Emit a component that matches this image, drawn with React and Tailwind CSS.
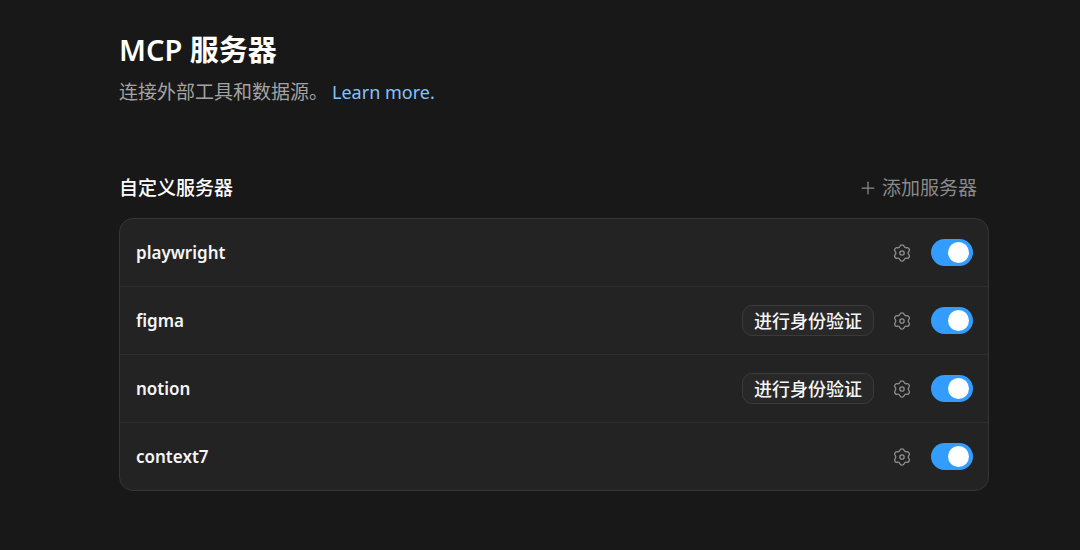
import React, { useState } from 'react';
import { Plus } from 'lucide-react';

const initialServers = [
  { name: 'playwright', needsAuth: false },
  { name: 'figma', needsAuth: true },
  { name: 'notion', needsAuth: true },
  { name: 'context7', needsAuth: false },
];

const GearIcon = () => (
  <svg
    viewBox="0 0 24 24"
    className="size-5"
    fill="none"
    stroke="currentColor"
    strokeWidth="1.6"
    strokeLinecap="round"
    strokeLinejoin="round"
    aria-hidden="true"
  >
    <path d="M9.3 4.3C9.8 2.9 10.7 2.3 12 2.3s2.2.6 2.7 2c.5 1.2 1.5 1.7 2.8 1.4 1.5-.3 2.4.2 3 1.3.7 1.2.6 2.2-.4 3.3-.9 1-.9 2.4 0 3.4 1 1.1 1.1 2.1.4 3.3-.6 1.1-1.5 1.6-3 1.3-1.3-.3-2.3.2-2.8 1.4-.5 1.4-1.4 2-2.7 2s-2.2-.6-2.7-2c-.5-1.2-1.5-1.7-2.8-1.4-1.5.3-2.4-.2-3-1.3-.7-1.2-.6-2.2.4-3.3.9-1 .9-2.4 0-3.4-1-1.1-1.1-2.1-.4-3.3.6-1.1 1.5-1.6 3-1.3 1.3.3 2.3-.2 2.8-1.4Z" />
    <circle cx="12" cy="12" r="2.6" />
  </svg>
);

const ServerRow = ({ server }) => {
  const [enabled, setEnabled] = useState(true);

  return (
    <li className="flex h-[68px] items-center border-b border-[#2e2e2e] pr-[15px] pl-4 last:h-[67px] last:border-b-0">
      <span className="flex-1 text-[17px] font-semibold text-[#f5f5f5]">{server.name}</span>
      {server.needsAuth && (
        <button
          type="button"
          className="mr-[18px] h-[31px] rounded-[10px] border border-[#3a3a3a] bg-[#282828] px-[11px] text-[18px] leading-7 font-medium text-[#f5f5f5]"
        >
          进行身份验证
        </button>
      )}
      <button type="button" aria-label={`${server.name} 设置`} className="mr-[19px] text-[#8f8f8f]">
        <GearIcon />
      </button>
      <input
        type="checkbox"
        role="switch"
        aria-label={server.name}
        checked={enabled}
        onChange={() => setEnabled(!enabled)}
        className="flex h-[27px] w-[42px] cursor-pointer appearance-none items-center rounded-full bg-[#4a4a4a] px-1 before:size-[21px] before:rounded-full before:bg-white checked:justify-end checked:bg-[#339cff]"
      />
    </li>
  );
};

const App = () => {
  return (
    <div className="min-h-screen bg-[#181818] pt-[30px] pr-[91px] pb-12 pl-[119px] font-['Noto_Sans','Noto_Sans_CJK_SC',sans-serif]">
      <header>
        <h1 className="text-[29px] leading-10 font-semibold text-white">MCP 服务器</h1>
        <p className="mt-2 text-[19px] leading-7 text-[#a3a3a3]">
          连接外部工具和数据源。
          <a href="#learn-more" className="ml-1 text-[18px] text-[#83c3ff]">Learn more.</a>
        </p>
      </header>

      <section className="mt-[68px]">
        <div className="flex items-center justify-between">
          <h2 className="text-[19px] leading-7 font-medium text-white">自定义服务器</h2>
          <button type="button" className="mr-3 flex items-center gap-1 text-[19px] leading-7 text-[#8a8a8a]">
            <Plus className="size-5" strokeWidth={1.5} />
            添加服务器
          </button>
        </div>

        <ul className="mt-4 rounded-[14px] border border-[#363636] bg-[#232323]">
          {initialServers.map(server => (
            <ServerRow key={server.name} server={server} />
          ))}
        </ul>
      </section>
    </div>
  );
};

export default App;
